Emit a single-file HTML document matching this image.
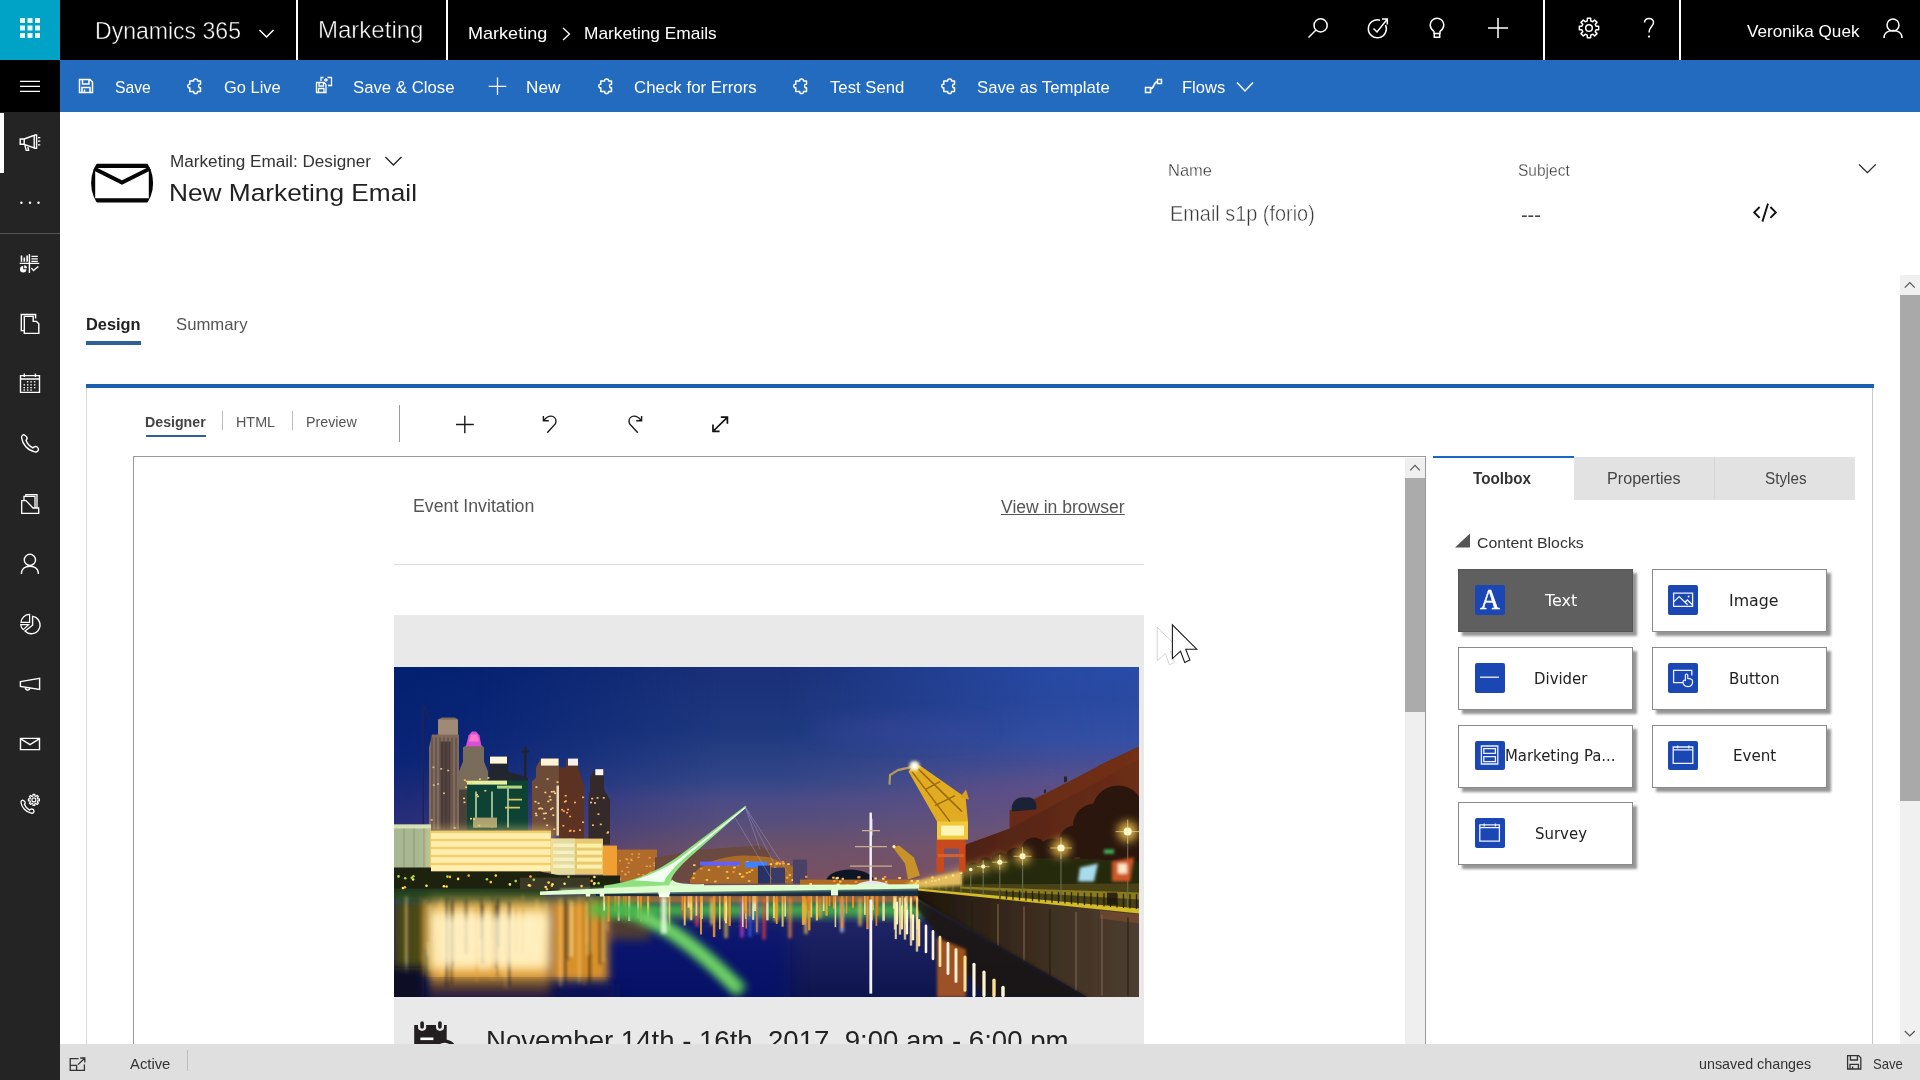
<!DOCTYPE html><html lang="en"><head><meta charset="utf-8"><title>New Marketing Email - Dynamics 365</title><style>
html,body{margin:0;padding:0}
body{width:1920px;height:1080px;overflow:hidden;background:#fff;position:relative;font-family:"Liberation Sans",sans-serif}
div,span,svg,nav,header,main,section,footer,a{position:absolute;display:block}
.t,.v{white-space:pre;line-height:1em;transform-origin:0 0}
.t{font-family:"Liberation Sans",sans-serif}
.v{font-family:"DejaVu Sans","Liberation Sans",sans-serif}
.ic{overflow:visible}
#top{left:0;top:0;width:1920px;height:60px;background:#000}
#waffle{left:0;top:0;width:60px;height:60px;background:#00a3c6}
.vs{top:0;width:2px;height:60px;background:#fff}
#cmd{left:60px;top:60px;width:1860px;height:52.4px;background:#236bbe}
#ham{left:0;top:60px;width:60px;height:52px;background:#000}
#side{left:0;top:112px;width:60px;height:968px;background:#242424}
#sel{left:0;top:113px;width:4px;height:60px;background:#fff}
#sidesep{left:0;top:233px;width:60px;height:1px;background:#555}
#tabul{left:86px;top:341px;width:55px;height:4px;background:#2f6099}
#blue{left:86px;top:384px;width:1788px;height:4px;background:#1c5fae}
#panel{left:86px;top:388px;width:1787px;height:700px;border-left:1px solid #d8d8d8;border-right:1px solid #c8c8c8;box-sizing:border-box}
#dul{left:146px;top:434.5px;width:60px;height:2px;background:#2f6099}
.sp{width:1px;background:#bbb}
#canvas{left:133px;top:456px;width:1293px;height:640px;border:1px solid #9a9a9a;box-sizing:border-box;background:#fff;overflow:hidden}
#csb{left:1405px;top:458px;width:20px;height:600px;background:#efefef}
#csbt{left:1405px;top:477.5px;width:20px;height:234px;background:#ababab}
#psb{left:1900px;top:275px;width:20px;height:770px;background:#f0f0f0}
#psbt{left:1900px;top:295px;width:20px;height:506px;background:#a9a9a9}
#tbtabs{left:1574px;top:457px;width:281px;height:42.5px;background:#e2e2e2}
#tbsep{left:1714px;top:457px;width:1px;height:42px;background:#d6d6d6}
#tbline{left:1433px;top:455.6px;width:141px;height:2.4px;background:#1767c9}
.tb{width:173px;height:61px;background:#fff;border:1px solid #8a8a8a;box-shadow:4px 4px 2.5px rgba(0,0,0,.42)}
.tb.on{background:#5f5f5f;border-color:#555}
.ti{width:29.5px;height:29.5px;border-radius:2px;background:#1b47b5}
#status{left:60px;top:1043.7px;width:1860px;height:36.3px;background:#e0dfe0}
#hr{left:393.5px;top:563.7px;width:750px;height:1px;background:#dcdcdc}
#gray{left:394px;top:615.4px;width:750px;height:470px;background:#e9e9ea}
#photo{left:394px;top:667.4px;width:745.2px;height:329.6px;background:#1c2c6a;overflow:hidden}
</style></head><body>
<main>
<div id="tabul"></div><div id="blue"></div><div id="panel"></div><div id="dul"></div>
<div class="sp" style="left:221.5px;top:411px;height:19px"></div><div class="sp" style="left:291.5px;top:411px;height:19px"></div><div class="sp" style="left:399px;top:405px;height:37px;background:#999"></div>
<section id="canvas"></section>
<div id="hr"></div><div id="gray"></div>
<div id="photo"><svg width="745.2" height="329.6" viewBox="394 667.4 745.2 329.6" preserveAspectRatio="none" style="left:0;top:0;filter:blur(.6px)"><defs>
<linearGradient id="sky" x1="0" y1="0" x2="0" y2="1"><stop offset="0" stop-color="#182e78"/><stop offset=".4" stop-color="#1f368a"/><stop offset=".68" stop-color="#33388c"/><stop offset=".88" stop-color="#54417e"/><stop offset="1" stop-color="#6e4a76"/></linearGradient>
<linearGradient id="skyr" x1="0" y1="0" x2="1" y2="0"><stop offset="0" stop-color="#0e1a66" stop-opacity=".55"/><stop offset=".35" stop-color="#1a2c8c" stop-opacity="0"/><stop offset=".7" stop-color="#2a4cb0" stop-opacity=".3"/><stop offset="1" stop-color="#2c50b8" stop-opacity=".55"/></linearGradient>
<radialGradient id="dusk" cx=".5" cy=".5" r=".5"><stop offset="0" stop-color="#8a5080" stop-opacity=".7"/><stop offset=".6" stop-color="#5a3c80" stop-opacity=".35"/><stop offset="1" stop-color="#3a3088" stop-opacity="0"/></radialGradient>
<linearGradient id="water" x1="0" y1="0" x2="0" y2="1"><stop offset="0" stop-color="#282d69"/><stop offset=".4" stop-color="#1c2262"/><stop offset="1" stop-color="#0d154e"/></linearGradient>
<linearGradient id="refl" x1="0" y1="0" x2="0" y2="1"><stop offset="0" stop-color="#c88a18"/><stop offset=".2" stop-color="#ffe9a8"/><stop offset=".66" stop-color="#ffdc90"/><stop offset=".82" stop-color="#d08a20"/><stop offset="1" stop-color="#5a3a20" stop-opacity=".8"/></linearGradient>
<linearGradient id="wall" x1="0" y1="0" x2="1" y2="0"><stop offset="0" stop-color="#1e160c"/><stop offset=".5" stop-color="#3c2c1e"/><stop offset="1" stop-color="#4e3e30"/></linearGradient>
<linearGradient id="brick" x1="0" y1="0" x2="1" y2="0"><stop offset="0" stop-color="#4e2212"/><stop offset="1" stop-color="#6c2e18"/></linearGradient>
<linearGradient id="mast" x1="0" y1="1" x2="1" y2="0"><stop offset="0" stop-color="#eaffd8"/><stop offset=".6" stop-color="#b8f0a0"/><stop offset="1" stop-color="#f4fff0"/></linearGradient>
<filter id="b1" x="-20%" y="-20%" width="140%" height="140%"><feGaussianBlur stdDeviation="0.7"/></filter>
<filter id="b2" x="-20%" y="-20%" width="140%" height="140%"><feGaussianBlur stdDeviation="1.6"/></filter>
<filter id="b4" x="-30%" y="-30%" width="160%" height="160%"><feGaussianBlur stdDeviation="4"/></filter>
<filter id="b8" x="-30%" y="-30%" width="160%" height="160%"><feGaussianBlur stdDeviation="9"/></filter>
</defs><defs><linearGradient id="skyL" gradientUnits="userSpaceOnUse" x1="0" y1="667" x2="0" y2="897"><stop offset="0.000" stop-color="#022070"/><stop offset="0.404" stop-color="#0a2476"/><stop offset="0.665" stop-color="#282d78"/><stop offset="0.839" stop-color="#4b3770"/><stop offset="0.991" stop-color="#644664"/></linearGradient><linearGradient id="skyM" gradientUnits="userSpaceOnUse" x1="0" y1="667" x2="0" y2="897"><stop offset="0.000" stop-color="#1a3078"/><stop offset="0.274" stop-color="#1e387e"/><stop offset="0.491" stop-color="#324687"/><stop offset="0.578" stop-color="#4b4b87"/><stop offset="0.665" stop-color="#554e7d"/><stop offset="0.796" stop-color="#6e5269"/><stop offset="0.970" stop-color="#7c505e"/></linearGradient><linearGradient id="skyR" gradientUnits="userSpaceOnUse" x1="0" y1="667" x2="0" y2="897"><stop offset="0.000" stop-color="#284ca8"/><stop offset="0.143" stop-color="#2a4aa2"/><stop offset="0.317" stop-color="#3450a5"/><stop offset="0.404" stop-color="#464e96"/><stop offset="0.491" stop-color="#58528c"/><stop offset="0.709" stop-color="#6e5478"/><stop offset="0.970" stop-color="#7c505e"/></linearGradient><linearGradient id="mL" gradientUnits="userSpaceOnUse" x1="394" y1="0" x2="720" y2="0"><stop offset="0" stop-color="#fff"/><stop offset=".25" stop-color="#e0e0e0"/><stop offset="1" stop-color="#000"/></linearGradient><linearGradient id="mR" gradientUnits="userSpaceOnUse" x1="780" y1="0" x2="1139" y2="0"><stop offset="0" stop-color="#000"/><stop offset=".75" stop-color="#e8e8e8"/><stop offset="1" stop-color="#fff"/></linearGradient><mask id="maskL" maskUnits="userSpaceOnUse" x="394" y="667" width="746" height="232"><rect x="394" y="667" width="746" height="232" fill="url(#mL)"/></mask><mask id="maskR" maskUnits="userSpaceOnUse" x="394" y="667" width="746" height="232"><rect x="394" y="667" width="746" height="232" fill="url(#mR)"/></mask></defs><rect x="394" y="667" width="746" height="232" fill="url(#skyM)"/><rect x="394" y="667" width="746" height="232" fill="url(#skyL)" mask="url(#maskL)"/><rect x="394" y="667" width="746" height="232" fill="url(#skyR)" mask="url(#maskR)"/><g filter="url(#b8)" opacity=".35"><ellipse cx="900" cy="730" rx="90" ry="10" fill="#4a4aa0"/><ellipse cx="1010" cy="792" rx="70" ry="9" fill="#6a4a88"/></g><rect x="394" y="890" width="746" height="108" fill="url(#water)"/><rect x="560" y="925" width="230" height="80" fill="#06107a" opacity=".55" filter="url(#b8)"/><g filter="url(#b1)"><path d="M423.2 705 V828 M423.2 705 L430 722" stroke="#1c2458" stroke-width="1.6" fill="none"/><path d="M525.3 747 V800 M522 752 H529" stroke="#20242e" stroke-width="2.4" fill="none"/><path d="M429 830 V748 L432 735 H438 V720 L442 718 H455 L458 720 V735 H459 V830 Z" fill="#806a5a"/><path d="M438 720 H458 V735 H438 Z" fill="#a08a74"/><rect x="440.5" y="742" width="10" height="88" fill="#3c2e2c" opacity=".8"/><path d="M432 738 V830" stroke="#5a4a48" stroke-width="1.2"/><path d="M436 738 V830" stroke="#5a4a48" stroke-width="1.2"/><path d="M440 738 V830" stroke="#5a4a48" stroke-width="1.2"/><path d="M444 738 V830" stroke="#5a4a48" stroke-width="1.2"/><path d="M448 738 V830" stroke="#5a4a48" stroke-width="1.2"/><path d="M452 738 V830" stroke="#5a4a48" stroke-width="1.2"/><path d="M456 738 V830" stroke="#5a4a48" stroke-width="1.2"/><path d="M459 830 V772 L463 762 V748 L466 746 H482 L484 748 V762 L488 772 V830 Z" fill="#7a6c5a"/><path d="M466 746.6 L468.5 736 L472 732 H476 L479.5 736 L481.5 746.6 Z" fill="#d850d8"/><path d="M469 742 L471 735 H477 L479 742 Z" fill="#ff78c8"/><path d="M489 830 V757 H508 V772 L528 778 V830 Z" fill="#23262e"/><rect x="490" y="757" width="17" height="7" fill="#fff8e0"/><rect x="459" y="790" width="10" height="40" fill="#4a4038"/><rect x="467" y="781" width="61" height="50" fill="#0e4236"/><rect x="467" y="781" width="40" height="4" fill="#e8f0a0"/><rect x="497" y="786" width="25" height="3" fill="#b0d880"/><path d="M476 792 V828 M492 792 V828 M508 788 V828" stroke="#9ab890" stroke-width="2"/><rect x="473" y="818" width="24" height="10" fill="#a8a070"/><path d="M508 800 H522 M505 808 H520" stroke="#d8c860" stroke-width="1.6"/><path d="M532 836 V782 L536 778 V768 L541 759 H559 V836 Z" fill="#6c4c38"/><rect x="541" y="759" width="17.5" height="7" fill="#fff4d8"/><rect x="556.5" y="786" width="2.6" height="50" fill="#e8d8b8"/><path d="M559 840 V768 H566 V760 H578 V768 L584 786 V840 Z" fill="#5c3020"/><rect x="568" y="759" width="10" height="7" fill="#f4f0f0"/><path d="M588.5 845 V800 L590 790 V778 L595 770 H604 V790 L610 800 V845 Z" fill="#352a2a"/><rect x="595.3" y="769.6" width="8" height="6" fill="#f8f4f0"/><rect x="470.4" y="783.0" width="2" height="1.6" fill="#ffc860"/><rect x="478.9" y="778.8" width="2" height="1.6" fill="#ffc860"/><rect x="475.9" y="794.4" width="2" height="1.6" fill="#ffc860"/><rect x="463.5" y="801.9" width="2" height="1.6" fill="#ffc860"/><rect x="463.0" y="798.0" width="2" height="1.6" fill="#ffc860"/><rect x="463.8" y="779.8" width="2" height="1.6" fill="#ffc860"/><rect x="473.0" y="818.8" width="2" height="1.6" fill="#ffc860"/><rect x="465.2" y="786.8" width="2" height="1.6" fill="#ffc860"/><rect x="478.3" y="825.2" width="2" height="1.6" fill="#ffc860"/><rect x="477.0" y="796.0" width="2" height="1.6" fill="#ffc860"/><rect x="487.4" y="777.5" width="2" height="1.6" fill="#ffc860"/><rect x="484.3" y="790.3" width="2" height="1.6" fill="#ffc860"/><rect x="465.8" y="781.2" width="2" height="1.6" fill="#ffc860"/><rect x="470.0" y="818.3" width="2" height="1.6" fill="#ffc860"/><rect x="538.2" y="808.2" width="2" height="1.6" fill="#ffd080"/><rect x="548.7" y="796.2" width="2" height="1.6" fill="#ffd080"/><rect x="546.6" y="778.6" width="2" height="1.6" fill="#ffd080"/><rect x="535.4" y="786.7" width="2" height="1.6" fill="#ffd080"/><rect x="549.6" y="799.4" width="2" height="1.6" fill="#ffd080"/><rect x="541.2" y="808.4" width="2" height="1.6" fill="#ffd080"/><rect x="544.4" y="792.1" width="2" height="1.6" fill="#ffd080"/><rect x="552.3" y="814.8" width="2" height="1.6" fill="#ffd080"/><rect x="539.6" y="807.7" width="2" height="1.6" fill="#ffd080"/><rect x="546.1" y="824.9" width="2" height="1.6" fill="#ffd080"/><rect x="550.8" y="791.4" width="2" height="1.6" fill="#ffd080"/><rect x="556.5" y="781.7" width="2" height="1.6" fill="#ffd080"/><rect x="543.6" y="818.2" width="2" height="1.6" fill="#ffd080"/><rect x="537.5" y="802.9" width="2" height="1.6" fill="#ffd080"/><rect x="534.9" y="813.1" width="2" height="1.6" fill="#ffd080"/><rect x="551.6" y="807.7" width="2" height="1.6" fill="#ffd080"/><rect x="554.1" y="792.9" width="2" height="1.6" fill="#ffd080"/><rect x="550.0" y="808.9" width="2" height="1.6" fill="#ffd080"/><rect x="547.3" y="801.0" width="2" height="1.6" fill="#ffd080"/><rect x="553.3" y="828.8" width="2" height="1.6" fill="#ffd080"/><rect x="544.9" y="812.9" width="2" height="1.6" fill="#ffd080"/><rect x="535.4" y="815.0" width="2" height="1.6" fill="#ffd080"/><rect x="548.9" y="831.6" width="2" height="1.6" fill="#ffd080"/><rect x="552.9" y="791.2" width="2" height="1.6" fill="#ffd080"/><rect x="542.9" y="813.1" width="2" height="1.6" fill="#ffd080"/><rect x="534.5" y="801.3" width="2" height="1.6" fill="#ffd080"/><rect x="564.7" y="795.4" width="2" height="1.6" fill="#ffb060"/><rect x="562.3" y="825.3" width="2" height="1.6" fill="#ffb060"/><rect x="563.8" y="801.4" width="2" height="1.6" fill="#ffb060"/><rect x="569.6" y="830.1" width="2" height="1.6" fill="#ffb060"/><rect x="562.8" y="810.7" width="2" height="1.6" fill="#ffb060"/><rect x="573.1" y="830.6" width="2" height="1.6" fill="#ffb060"/><rect x="579.0" y="829.7" width="2" height="1.6" fill="#ffb060"/><rect x="567.1" y="809.1" width="2" height="1.6" fill="#ffb060"/><rect x="568.9" y="830.7" width="2" height="1.6" fill="#ffb060"/><rect x="582.1" y="796.9" width="2" height="1.6" fill="#ffb060"/><rect x="564.9" y="800.7" width="2" height="1.6" fill="#ffb060"/><rect x="566.1" y="812.3" width="2" height="1.6" fill="#ffb060"/><rect x="574.0" y="802.1" width="2" height="1.6" fill="#ffb060"/><rect x="561.1" y="809.3" width="2" height="1.6" fill="#ffb060"/><rect x="569.1" y="816.1" width="2" height="1.6" fill="#ffb060"/><rect x="582.0" y="821.8" width="2" height="1.6" fill="#ffb060"/><rect x="599.8" y="824.0" width="2" height="1.6" fill="#ffc070"/><rect x="602.8" y="797.5" width="2" height="1.6" fill="#ffc070"/><rect x="607.1" y="831.7" width="2" height="1.6" fill="#ffc070"/><rect x="606.6" y="832.5" width="2" height="1.6" fill="#ffc070"/><rect x="597.5" y="813.8" width="2" height="1.6" fill="#ffc070"/><rect x="592.0" y="824.8" width="2" height="1.6" fill="#ffc070"/><rect x="591.2" y="798.2" width="2" height="1.6" fill="#ffc070"/><rect x="594.0" y="802.6" width="2" height="1.6" fill="#ffc070"/><rect x="596.5" y="797.5" width="2" height="1.6" fill="#ffc070"/><rect x="590.0" y="802.1" width="2" height="1.6" fill="#ffc070"/><rect x="432.8" y="784.7" width="2" height="1.6" fill="#d8b890"/><rect x="430.7" y="819.5" width="2" height="1.6" fill="#d8b890"/><rect x="447.2" y="770.1" width="2" height="1.6" fill="#d8b890"/><rect x="437.1" y="783.6" width="2" height="1.6" fill="#d8b890"/><rect x="440.2" y="768.4" width="2" height="1.6" fill="#d8b890"/><rect x="453.8" y="827.5" width="2" height="1.6" fill="#d8b890"/><rect x="443.0" y="792.9" width="2" height="1.6" fill="#d8b890"/><rect x="432.4" y="766.9" width="2" height="1.6" fill="#d8b890"/></g><g filter="url(#b1)"><rect x="394" y="825" width="37" height="44" fill="#aab892"/><path d="M394 825 H431 V829 H394 Z" fill="#d8e0b8"/><path d="M404 829 V868 M414 829 V868 M424 829 V868" stroke="#8a9a78" stroke-width="1"/><rect x="430" y="831" width="121" height="41" fill="#efc050"/><rect x="431" y="833.5" width="119.5" height="5.8" fill="#fffad4"/><rect x="431" y="841.5" width="119.5" height="5.8" fill="#fffad4"/><rect x="431" y="849.5" width="119.5" height="5.8" fill="#fffad4"/><rect x="431" y="857.5" width="119.5" height="5.8" fill="#fffad4"/><rect x="431" y="865.5" width="119.5" height="5.8" fill="#fffad4"/><rect x="551" y="839" width="52" height="36" fill="#e8c870"/><rect x="551" y="839" width="24" height="36" fill="#e4dca0"/><rect x="577" y="844" width="25" height="4" fill="#fff0a8"/><rect x="553" y="844" width="21" height="3.4" fill="#fff8d0" opacity=".7"/><rect x="577" y="851" width="25" height="4" fill="#fff0a8"/><rect x="553" y="851" width="21" height="3.4" fill="#fff8d0" opacity=".7"/><rect x="577" y="858" width="25" height="4" fill="#fff0a8"/><rect x="553" y="858" width="21" height="3.4" fill="#fff8d0" opacity=".7"/><rect x="577" y="865" width="25" height="4" fill="#fff0a8"/><rect x="553" y="865" width="21" height="3.4" fill="#fff8d0" opacity=".7"/><rect x="603" y="846" width="14" height="36" fill="#f0a030"/><rect x="617" y="850" width="40" height="32" fill="#b06a2c"/><rect x="630.7" y="860.1" width="2" height="1.5" fill="#e8a050"/><rect x="648.7" y="857.4" width="2" height="1.5" fill="#e8a050"/><rect x="618.9" y="878.7" width="2" height="1.5" fill="#e8a050"/><rect x="637.5" y="857.0" width="2" height="1.5" fill="#e8a050"/><rect x="638.1" y="853.7" width="2" height="1.5" fill="#e8a050"/><rect x="637.5" y="879.4" width="2" height="1.5" fill="#e8a050"/><rect x="649.9" y="871.8" width="2" height="1.5" fill="#e8a050"/><rect x="627.7" y="862.9" width="2" height="1.5" fill="#e8a050"/><rect x="624.2" y="873.8" width="2" height="1.5" fill="#e8a050"/><rect x="637.7" y="874.0" width="2" height="1.5" fill="#e8a050"/><rect x="630.2" y="859.0" width="2" height="1.5" fill="#e8a050"/><rect x="648.0" y="879.6" width="2" height="1.5" fill="#e8a050"/><rect x="649.5" y="874.8" width="2" height="1.5" fill="#e8a050"/><rect x="648.3" y="873.0" width="2" height="1.5" fill="#e8a050"/><rect x="626.4" y="867.0" width="2" height="1.5" fill="#e8a050"/><rect x="631.2" y="853.8" width="2" height="1.5" fill="#e8a050"/><rect x="619.0" y="860.5" width="2" height="1.5" fill="#e8a050"/><rect x="627.6" y="871.7" width="2" height="1.5" fill="#e8a050"/><rect x="653.4" y="865.1" width="2" height="1.5" fill="#e8a050"/><rect x="652.7" y="879.7" width="2" height="1.5" fill="#e8a050"/><rect x="653.3" y="862.8" width="2" height="1.5" fill="#e8a050"/><rect x="626.2" y="859.1" width="2" height="1.5" fill="#e8a050"/><rect x="625.3" y="858.5" width="2" height="1.5" fill="#e8a050"/><rect x="641.1" y="877.3" width="2" height="1.5" fill="#e8a050"/><rect x="649.1" y="865.9" width="2" height="1.5" fill="#e8a050"/><rect x="642.2" y="874.6" width="2" height="1.5" fill="#e8a050"/><rect x="621.1" y="870.8" width="2" height="1.5" fill="#e8a050"/><rect x="651.7" y="874.1" width="2" height="1.5" fill="#e8a050"/><rect x="645.8" y="865.9" width="2" height="1.5" fill="#e8a050"/><rect x="624.6" y="874.3" width="2" height="1.5" fill="#e8a050"/></g><rect x="428" y="828" width="125" height="47" fill="#ffe080" opacity=".45" filter="url(#b4)"/><g filter="url(#b1)"><path d="M655 883 V858 L700 850 L760 846 L770 852 V883 Z" fill="#6a4a40"/><path d="M690 880 C700 858 740 852 770 858 L800 870 V884 H690 Z" fill="#a86a28"/><rect x="726.6" y="877.6" width="2.4" height="1.8" fill="#e8c050"/><rect x="740.9" y="876.4" width="2.4" height="1.8" fill="#ffb040"/><rect x="769.7" y="863.7" width="2.4" height="1.8" fill="#ffd070"/><rect x="693.0" y="873.0" width="2.4" height="1.8" fill="#e8c050"/><rect x="778.7" y="863.2" width="2.4" height="1.8" fill="#e8c050"/><rect x="762.3" y="867.7" width="2.4" height="1.8" fill="#ffd070"/><rect x="692.4" y="877.6" width="2.4" height="1.8" fill="#ffb040"/><rect x="747.9" y="880.5" width="2.4" height="1.8" fill="#e8c050"/><rect x="798.5" y="864.3" width="2.4" height="1.8" fill="#ffd070"/><rect x="693.1" y="864.7" width="2.4" height="1.8" fill="#ffd070"/><rect x="774.0" y="867.2" width="2.4" height="1.8" fill="#e8c050"/><rect x="781.8" y="861.3" width="2.4" height="1.8" fill="#ff9030"/><rect x="788.7" y="874.6" width="2.4" height="1.8" fill="#e8c050"/><rect x="781.0" y="879.3" width="2.4" height="1.8" fill="#ffd070"/><rect x="748.5" y="871.5" width="2.4" height="1.8" fill="#ffb040"/><rect x="786.0" y="877.1" width="2.4" height="1.8" fill="#ffb040"/><rect x="775.4" y="863.3" width="2.4" height="1.8" fill="#ffd070"/><rect x="742.1" y="876.0" width="2.4" height="1.8" fill="#ffb040"/><rect x="725.9" y="871.4" width="2.4" height="1.8" fill="#e8c050"/><rect x="776.3" y="862.3" width="2.4" height="1.8" fill="#ffb040"/><rect x="717.3" y="866.1" width="2.4" height="1.8" fill="#ffb040"/><rect x="745.8" y="872.4" width="2.4" height="1.8" fill="#ffb040"/><rect x="738.8" y="873.5" width="2.4" height="1.8" fill="#ffd070"/><rect x="766.2" y="870.0" width="2.4" height="1.8" fill="#e8c050"/><rect x="745.9" y="865.4" width="2.4" height="1.8" fill="#ff9030"/><rect x="791.5" y="879.6" width="2.4" height="1.8" fill="#ffd070"/><rect x="782.4" y="863.0" width="2.4" height="1.8" fill="#ffb040"/><rect x="733.2" y="867.0" width="2.4" height="1.8" fill="#ffd070"/><rect x="737.1" y="864.7" width="2.4" height="1.8" fill="#ff9030"/><rect x="776.2" y="879.7" width="2.4" height="1.8" fill="#ffd070"/><rect x="793.3" y="874.2" width="2.4" height="1.8" fill="#ff9030"/><rect x="705.7" y="879.4" width="2.4" height="1.8" fill="#e8c050"/><rect x="714.2" y="881.0" width="2.4" height="1.8" fill="#e8c050"/><rect x="787.3" y="863.6" width="2.4" height="1.8" fill="#ffd070"/><rect x="707.8" y="869.5" width="2.4" height="1.8" fill="#e8c050"/><rect x="727.3" y="864.3" width="2.4" height="1.8" fill="#ff9030"/><rect x="700.1" y="868.1" width="2.4" height="1.8" fill="#ff9030"/><rect x="750.9" y="869.7" width="2.4" height="1.8" fill="#ffb040"/><rect x="732.3" y="871.4" width="2.4" height="1.8" fill="#ff9030"/><rect x="746.3" y="861.4" width="2.4" height="1.8" fill="#ffd070"/><rect x="700" y="862" width="40" height="4" fill="#6060ff"/><rect x="745" y="862" width="22" height="6" fill="#4080ff"/><rect x="758" y="866" width="12" height="18" fill="#283068"/><rect x="771" y="868" width="14" height="16" fill="#3a3a6a"/><rect x="793" y="860" width="14" height="24" fill="#4a4266"/><ellipse cx="850" cy="882" rx="24" ry="12" fill="#101828"/><rect x="800" y="880" width="120" height="8" fill="#b06a20"/><rect x="931.2" y="877.0" width="2.4" height="2" fill="#ffe080"/><rect x="836.7" y="885.1" width="2.4" height="2" fill="#ffc050"/><rect x="836.5" y="877.3" width="2.4" height="2" fill="#ffe080"/><rect x="914.7" y="882.8" width="2.4" height="2" fill="#ffe080"/><rect x="854.8" y="881.4" width="2.4" height="2" fill="#ff9030"/><rect x="877.0" y="883.0" width="2.4" height="2" fill="#ffc050"/><rect x="837.7" y="884.0" width="2.4" height="2" fill="#ffc050"/><rect x="857.4" y="876.7" width="2.4" height="2" fill="#ffc050"/><rect x="885.6" y="884.0" width="2.4" height="2" fill="#ffc050"/><rect x="882.1" y="878.2" width="2.4" height="2" fill="#ffe080"/><rect x="916.5" y="880.5" width="2.4" height="2" fill="#ffe080"/><rect x="934.2" y="880.2" width="2.4" height="2" fill="#ffe080"/><rect x="883.9" y="876.4" width="2.4" height="2" fill="#ff9030"/><rect x="832.2" y="877.1" width="2.4" height="2" fill="#ffc050"/><rect x="835.4" y="877.8" width="2.4" height="2" fill="#ffe080"/><rect x="884.9" y="881.3" width="2.4" height="2" fill="#ffc050"/><rect x="839.1" y="881.0" width="2.4" height="2" fill="#ffc050"/><rect x="836.5" y="884.0" width="2.4" height="2" fill="#ffe080"/><rect x="805.0" y="876.2" width="2.4" height="2" fill="#ff9030"/><rect x="874.4" y="877.9" width="2.4" height="2" fill="#ffe080"/><rect x="833.2" y="880.5" width="2.4" height="2" fill="#ff9030"/><rect x="910.6" y="880.3" width="2.4" height="2" fill="#ffe080"/><rect x="873.7" y="884.9" width="2.4" height="2" fill="#ff9030"/><rect x="841.6" y="878.2" width="2.4" height="2" fill="#ffc050"/><rect x="846.3" y="884.3" width="2.4" height="2" fill="#ff9030"/><rect x="898.4" y="877.4" width="2.4" height="2" fill="#ffe080"/><rect x="932.6" y="884.4" width="2.4" height="2" fill="#ffc050"/><rect x="809.5" y="883.4" width="2.4" height="2" fill="#ffe080"/><rect x="858.1" y="876.6" width="2.4" height="2" fill="#ff9030"/><rect x="913.6" y="884.7" width="2.4" height="2" fill="#ff9030"/></g><g filter="url(#b1)"><path d="M394 868 H431 V872 H540 L560 876 H620 V892 H394 Z" fill="#1c2410"/><rect x="394" y="889" width="150" height="11" fill="#22381c"/><rect x="520" y="878" width="70" height="12" fill="#3a3828"/><circle cx="594.1" cy="884.4" r="1.3" fill="#a0e040"/><circle cx="405.2" cy="878.6" r="1.3" fill="#a0e040"/><circle cx="486.9" cy="879.7" r="1.3" fill="#a0e040"/><circle cx="594.4" cy="883.7" r="1.3" fill="#ffe880"/><circle cx="403.0" cy="888.4" r="1.3" fill="#ffe880"/><circle cx="468.7" cy="876.0" r="1.3" fill="#ffb030"/><circle cx="413.1" cy="879.9" r="1.3" fill="#ffe880"/><circle cx="446.6" cy="886.9" r="1.3" fill="#ffd040"/><circle cx="449.9" cy="877.3" r="1.3" fill="#ffb030"/><circle cx="515.7" cy="881.5" r="1.3" fill="#a0e040"/><circle cx="458.1" cy="879.3" r="1.3" fill="#ffe880"/><circle cx="530.1" cy="886.0" r="1.3" fill="#ffb030"/><circle cx="551.9" cy="886.1" r="1.3" fill="#ffb030"/><circle cx="426.5" cy="886.1" r="1.3" fill="#ffe880"/><circle cx="404.9" cy="887.7" r="1.3" fill="#ffb030"/><circle cx="545.7" cy="887.4" r="1.3" fill="#ffe880"/><circle cx="581.6" cy="886.5" r="1.3" fill="#ffd040"/><circle cx="564.6" cy="884.2" r="1.3" fill="#ffe880"/><circle cx="413.4" cy="876.6" r="1.3" fill="#a0e040"/><circle cx="591.7" cy="881.3" r="1.3" fill="#ffb030"/><circle cx="509.9" cy="884.8" r="1.3" fill="#ffe880"/><circle cx="495.8" cy="876.0" r="1.3" fill="#ffd040"/><circle cx="548.6" cy="883.0" r="1.3" fill="#ffd040"/><circle cx="530.5" cy="876.9" r="1.3" fill="#ffb030"/><circle cx="447.4" cy="877.0" r="1.3" fill="#a0e040"/><circle cx="443.9" cy="886.6" r="1.3" fill="#ffe880"/><circle cx="546.9" cy="889.7" r="1.3" fill="#ffb030"/><circle cx="568.5" cy="877.1" r="1.3" fill="#a0e040"/><circle cx="552.5" cy="884.6" r="1.3" fill="#ffe880"/><circle cx="411.8" cy="878.1" r="1.3" fill="#a0e040"/><circle cx="528.9" cy="885.7" r="1.3" fill="#ffe880"/><circle cx="398.5" cy="876.8" r="1.3" fill="#a0e040"/><circle cx="594.4" cy="877.4" r="1.3" fill="#ffe880"/><circle cx="533.8" cy="880.1" r="1.3" fill="#a0e040"/><circle cx="490.8" cy="882.5" r="1.3" fill="#ffd040"/><circle cx="598.6" cy="883.7" r="1.3" fill="#a0e040"/></g><g filter="url(#b4)"><rect x="394" y="900" width="36" height="76" fill="#4a4a14"/><rect x="429" y="898" width="121" height="100" fill="url(#refl)"/><rect x="552" y="898" width="56" height="84" fill="#d8902a"/><rect x="610" y="900" width="40" height="40" fill="#6a4a20" opacity=".7"/></g><g filter="url(#b2)"><path d="M607.3 904.4 V931.1" stroke="#ffd070" stroke-width="1.3" opacity=".6"/><path d="M505.4 905.0 V989.6" stroke="#ffd070" stroke-width="1.6" opacity=".6"/><path d="M600.2 897.9 V964.9" stroke="#3a2a10" stroke-width="2.5" opacity=".6"/><path d="M452.6 899.2 V966.2" stroke="#1a1a30" stroke-width="2.1" opacity=".6"/><path d="M587.6 902.3 V943.9" stroke="#ffd070" stroke-width="1.9" opacity=".6"/><path d="M430.4 904.5 V970.9" stroke="#ffd070" stroke-width="1.7" opacity=".6"/><path d="M426.4 899.1 V949.0" stroke="#e8a030" stroke-width="1.8" opacity=".6"/><path d="M466.1 899.0 V953.9" stroke="#3a2a10" stroke-width="2.5" opacity=".6"/><path d="M590.7 898.6 V952.3" stroke="#ffd070" stroke-width="1.9" opacity=".6"/><path d="M583.9 896.7 V985.5" stroke="#e8a030" stroke-width="1.7" opacity=".6"/><path d="M406.4 896.9 V980.1" stroke="#fff0b0" stroke-width="2.3" opacity=".6"/><path d="M428.2 904.7 V956.2" stroke="#fff0b0" stroke-width="1.5" opacity=".6"/><path d="M476.6 904.6 V983.1" stroke="#e8a030" stroke-width="2.6" opacity=".6"/><path d="M482.4 903.9 V963.2" stroke="#3a2a10" stroke-width="2.5" opacity=".6"/><path d="M406.7 902.6 V957.1" stroke="#e8a030" stroke-width="1.4" opacity=".6"/><path d="M583.8 900.4 V984.7" stroke="#a86a18" stroke-width="1.4" opacity=".6"/><path d="M498.0 899.1 V947.9" stroke="#1a1a30" stroke-width="2.5" opacity=".6"/><path d="M537.0 899.7 V944.3" stroke="#ffd070" stroke-width="2.2" opacity=".6"/><path d="M481.2 897.5 V939.7" stroke="#3a2a10" stroke-width="2.1" opacity=".6"/><path d="M571.4 901.0 V957.2" stroke="#fff0b0" stroke-width="3.0" opacity=".6"/><path d="M493.2 897.3 V941.5" stroke="#2a2008" stroke-width="1.5" opacity=".6"/><path d="M516.1 898.9 V952.1" stroke="#e8a030" stroke-width="2.2" opacity=".6"/><path d="M587.6 902.7 V954.8" stroke="#ffd070" stroke-width="2.5" opacity=".6"/><path d="M441.4 898.4 V975.1" stroke="#ffd070" stroke-width="1.7" opacity=".6"/><path d="M605.0 897.1 V960.2" stroke="#1a1a30" stroke-width="2.6" opacity=".6"/><path d="M579.3 896.8 V983.8" stroke="#ffd070" stroke-width="1.9" opacity=".6"/><path d="M492.3 904.6 V980.9" stroke="#e8a030" stroke-width="2.9" opacity=".6"/><path d="M423.5 899.8 V975.8" stroke="#e8a030" stroke-width="2.1" opacity=".6"/><path d="M522.8 896.0 V953.5" stroke="#e8a030" stroke-width="2.2" opacity=".6"/><path d="M497.1 900.0 V977.0" stroke="#3a2a10" stroke-width="1.5" opacity=".6"/><path d="M508.8 902.1 V986.5" stroke="#1a1a30" stroke-width="2.5" opacity=".6"/><path d="M578.8 904.1 V935.1" stroke="#e8a030" stroke-width="1.3" opacity=".6"/><path d="M565.0 898.1 V985.2" stroke="#1a1a30" stroke-width="2.5" opacity=".6"/><path d="M603.9 901.6 V961.7" stroke="#ffd070" stroke-width="2.5" opacity=".6"/><path d="M420.2 896.6 V961.5" stroke="#a86a18" stroke-width="1.5" opacity=".6"/><path d="M452.4 903.1 V930.1" stroke="#a86a18" stroke-width="1.7" opacity=".6"/><path d="M495.5 904.6 V968.7" stroke="#3a2a10" stroke-width="2.1" opacity=".6"/><path d="M446.7 898.2 V987.6" stroke="#1a1a30" stroke-width="2.4" opacity=".6"/><path d="M407.9 897.7 V983.1" stroke="#1a1a30" stroke-width="2.0" opacity=".6"/><path d="M451.6 902.0 V985.5" stroke="#3a2a10" stroke-width="2.1" opacity=".6"/><path d="M546.3 902.5 V951.7" stroke="#ffd070" stroke-width="1.6" opacity=".6"/><path d="M568.2 902.7 V960.3" stroke="#3a2a10" stroke-width="2.1" opacity=".6"/><path d="M439.3 902.9 V941.6" stroke="#ffd070" stroke-width="1.6" opacity=".6"/><path d="M560.3 898.7 V987.1" stroke="#ffd070" stroke-width="2.3" opacity=".6"/><path d="M589.6 900.4 V984.6" stroke="#2a2008" stroke-width="2.9" opacity=".6"/><path d="M427.6 899.5 V942.8" stroke="#a86a18" stroke-width="1.5" opacity=".6"/></g><rect x="394" y="984" width="220" height="20" fill="#10144a" opacity=".7" filter="url(#b8)"/><rect x="380" y="968" width="44" height="40" fill="#080a28" filter="url(#b4)"/><rect x="436" y="916" width="108" height="50" fill="#fff2c8" opacity=".8" filter="url(#b4)"/><g filter="url(#b4)"><rect x="590" y="904" width="335" height="13" fill="#48c048" opacity=".9"/><rect x="394" y="896" width="220" height="5" fill="#2a6a3a" opacity=".7"/></g><g filter="url(#b2)"><path d="M684 898 V919.14" stroke="#ff4040" stroke-width="3" opacity=".8"/><path d="M690 898 V919.323" stroke="#ff8040" stroke-width="3" opacity=".8"/><path d="M697 898 V926.653" stroke="#ff4060" stroke-width="3" opacity=".8"/><path d="M742 898 V937.76" stroke="#e040e0" stroke-width="3" opacity=".8"/><path d="M750 898 V937.439" stroke="#4060ff" stroke-width="3" opacity=".8"/><path d="M757 898 V934.12" stroke="#3080ff" stroke-width="3" opacity=".8"/><path d="M764 898 V939.946" stroke="#ff4040" stroke-width="3" opacity=".8"/><path d="M726 898 V938.495" stroke="#ffd040" stroke-width="3" opacity=".8"/><path d="M712 898 V925.243" stroke="#ffe080" stroke-width="3" opacity=".8"/><path d="M776 898 V922.081" stroke="#ffd040" stroke-width="3" opacity=".8"/><path d="M790 898 V938.589" stroke="#ff9040" stroke-width="3" opacity=".8"/><path d="M806 898 V934.419" stroke="#ffd060" stroke-width="3" opacity=".8"/><path d="M820 898 V918.702" stroke="#ffb040" stroke-width="3" opacity=".8"/><path d="M842 898 V932.617" stroke="#e8e8ff" stroke-width="3" opacity=".8"/><path d="M860 898 V926.33" stroke="#ffd060" stroke-width="3" opacity=".8"/></g><g filter="url(#b1)"><path d="M746.0 896 V919.4" stroke="#fff0b0" stroke-width="1.9" opacity=".85"/><path d="M872.5 896 V910.6" stroke="#fff0b0" stroke-width="2.2" opacity=".85"/><path d="M853.0 896 V908.3" stroke="#ff9a20" stroke-width="2.0" opacity=".85"/><path d="M883.6 896 V921.2" stroke="#fff0b0" stroke-width="2.6" opacity=".85"/><path d="M809.3 896 V930.8" stroke="#ff9a20" stroke-width="2.4" opacity=".85"/><path d="M623.8 896 V906.9" stroke="#ff8018" stroke-width="1.4" opacity=".85"/><path d="M749.7 896 V916.6" stroke="#ff8018" stroke-width="1.7" opacity=".85"/><path d="M696.4 896 V916.1" stroke="#ffe8a0" stroke-width="1.7" opacity=".85"/><path d="M917.3 896 V929.9" stroke="#ffe8a0" stroke-width="1.7" opacity=".85"/><path d="M842.0 896 V928.3" stroke="#ff8018" stroke-width="2.3" opacity=".85"/><path d="M729.7 896 V926.3" stroke="#ff9a20" stroke-width="2.4" opacity=".85"/><path d="M604.2 896 V911.0" stroke="#fff0b0" stroke-width="1.9" opacity=".85"/><path d="M826.6 896 V916.1" stroke="#ffb030" stroke-width="2.3" opacity=".85"/><path d="M688.7 896 V908.1" stroke="#fff0b0" stroke-width="2.3" opacity=".85"/><path d="M641.0 896 V921.9" stroke="#ff9a20" stroke-width="2.0" opacity=".85"/><path d="M756.9 896 V932.4" stroke="#ff8018" stroke-width="1.6" opacity=".85"/><path d="M833.8 896 V909.1" stroke="#ff9a20" stroke-width="1.9" opacity=".85"/><path d="M914.9 896 V906.0" stroke="#e87818" stroke-width="2.1" opacity=".85"/><path d="M917.3 896 V916.5" stroke="#e87818" stroke-width="2.1" opacity=".85"/><path d="M785.2 896 V917.0" stroke="#fff0b0" stroke-width="1.7" opacity=".85"/><path d="M846.6 896 V913.9" stroke="#ff9a20" stroke-width="1.5" opacity=".85"/><path d="M669.5 896 V931.3" stroke="#ffd860" stroke-width="1.8" opacity=".85"/><path d="M746.3 896 V929.0" stroke="#ff8018" stroke-width="1.6" opacity=".85"/><path d="M725.2 896 V921.1" stroke="#ffb030" stroke-width="2.4" opacity=".85"/><path d="M682.3 896 V910.6" stroke="#ff8018" stroke-width="1.6" opacity=".85"/><path d="M902.3 896 V927.2" stroke="#fff0b0" stroke-width="1.5" opacity=".85"/><path d="M638.2 896 V918.3" stroke="#ffe8a0" stroke-width="2.2" opacity=".85"/><path d="M684.7 896 V925.8" stroke="#ffd860" stroke-width="2.0" opacity=".85"/><path d="M895.8 896 V939.5" stroke="#fff0b0" stroke-width="2.1" opacity=".85"/><path d="M871.7 896 V920.7" stroke="#ffb030" stroke-width="2.3" opacity=".85"/><path d="M625.7 896 V915.9" stroke="#ff9a20" stroke-width="1.6" opacity=".85"/><path d="M719.8 896 V929.7" stroke="#ffd860" stroke-width="1.6" opacity=".85"/><path d="M745.4 896 V913.9" stroke="#ff8018" stroke-width="2.1" opacity=".85"/><path d="M648.1 896 V916.8" stroke="#ffd860" stroke-width="2.2" opacity=".85"/><path d="M906.3 896 V906.5" stroke="#fff0b0" stroke-width="1.5" opacity=".85"/><path d="M701.7 896 V919.3" stroke="#fff0b0" stroke-width="2.1" opacity=".85"/><path d="M835.4 896 V927.6" stroke="#ffe8a0" stroke-width="1.6" opacity=".85"/><path d="M906.5 896 V924.2" stroke="#fff0b0" stroke-width="2.5" opacity=".85"/><path d="M877.5 896 V916.0" stroke="#e87818" stroke-width="2.0" opacity=".85"/><path d="M608.6 896 V921.9" stroke="#ff9a20" stroke-width="2.1" opacity=".85"/><path d="M629.2 896 V921.3" stroke="#fff0b0" stroke-width="2.3" opacity=".85"/><path d="M726.0 896 V923.6" stroke="#fff0b0" stroke-width="2.0" opacity=".85"/><path d="M774.0 896 V918.4" stroke="#ffd860" stroke-width="2.1" opacity=".85"/><path d="M755.0 896 V911.5" stroke="#fff0b0" stroke-width="2.3" opacity=".85"/><path d="M811.3 896 V917.7" stroke="#ffd860" stroke-width="1.8" opacity=".85"/><path d="M816.9 896 V920.9" stroke="#ffd860" stroke-width="2.2" opacity=".85"/><path d="M742.8 896 V927.4" stroke="#ffe8a0" stroke-width="1.7" opacity=".85"/><path d="M803.1 896 V925.3" stroke="#ffb030" stroke-width="2.5" opacity=".85"/><path d="M724.7 896 V920.0" stroke="#ffb030" stroke-width="1.6" opacity=".85"/><path d="M714.1 896 V937.5" stroke="#ff9a20" stroke-width="2.5" opacity=".85"/><path d="M690.9 896 V910.1" stroke="#ffd860" stroke-width="2.5" opacity=".85"/><path d="M864.9 896 V915.2" stroke="#ffe8a0" stroke-width="1.8" opacity=".85"/><path d="M867.5 896 V929.6" stroke="#ff9a20" stroke-width="2.4" opacity=".85"/><path d="M691.3 896 V920.6" stroke="#ffd860" stroke-width="2.1" opacity=".85"/><path d="M701.0 896 V935.0" stroke="#ffb030" stroke-width="1.9" opacity=".85"/><path d="M663.6 896 V924.5" stroke="#e87818" stroke-width="1.6" opacity=".85"/><path d="M618.7 896 V921.1" stroke="#ffe8a0" stroke-width="2.0" opacity=".85"/><path d="M804.9 896 V924.8" stroke="#ffb030" stroke-width="1.6" opacity=".85"/><path d="M753.2 896 V920.3" stroke="#fff0b0" stroke-width="2.0" opacity=".85"/><path d="M615.4 896 V911.4" stroke="#ff8018" stroke-width="2.2" opacity=".85"/><path d="M767.4 896 V920.7" stroke="#fff0b0" stroke-width="2.4" opacity=".85"/><path d="M823.7 896 V911.4" stroke="#ffe8a0" stroke-width="1.9" opacity=".85"/><path d="M745.5 896 V910.7" stroke="#ff9a20" stroke-width="1.9" opacity=".85"/><path d="M782.6 896 V927.1" stroke="#ffd860" stroke-width="2.0" opacity=".85"/><path d="M808.5 896 V910.9" stroke="#e87818" stroke-width="2.4" opacity=".85"/><path d="M894.2 896 V909.0" stroke="#fff0b0" stroke-width="2.6" opacity=".85"/><path d="M910.9 896 V918.9" stroke="#ffd860" stroke-width="1.7" opacity=".85"/><path d="M829.5 896 V906.4" stroke="#ff9a20" stroke-width="1.9" opacity=".85"/><path d="M776.8 896 V924.4" stroke="#ff9a20" stroke-width="1.7" opacity=".85"/><path d="M876.4 896 V926.3" stroke="#ff8018" stroke-width="1.8" opacity=".85"/></g><rect x="604" y="894" width="316" height="9" fill="#e88a20" opacity=".55" filter="url(#b2)"/><path d="M612 908 C660 916 700 950 742 992" stroke="#48b850" stroke-width="15" fill="none" filter="url(#b4)" opacity=".95"/><path d="M640 916 C676 930 708 958 738 990" stroke="#90e878" stroke-width="6" fill="none" filter="url(#b4)"/><rect x="869.4" y="900" width="2.8" height="94" fill="#f4f4ff" filter="url(#b1)"/><rect x="661" y="898" width="6" height="36" fill="#e8ffe0" filter="url(#b2)" opacity=".8"/><g filter="url(#b1)"><path d="M962 886 V849 L967 844.5 L985 838 L1009.7 829 V811 L1040 797 L1075 779 L1105 763 L1139.4 746.6 V890 Z" fill="url(#brick)"/><path d="M1009.7 829 V811 L1139.4 747 V760 Z" fill="#7a3418" opacity=".45"/><path d="M1064 783 V777 H1067 V782 Z M1044 794 V790 H1046 V793 Z" fill="#2a2030"/><path d="M1012 812 C1010 802 1018 796 1026 798 C1034 796 1038 804 1036 810 Z" fill="#1c2434"/><g fill="#2a160c"><circle cx="1118" cy="812" r="26"/><circle cx="1095" cy="826" r="22"/><circle cx="1132" cy="836" r="24"/><circle cx="1075" cy="842" r="16"/><circle cx="1100" cy="850" r="22"/><circle cx="1052" cy="852" r="13"/><circle cx="1034" cy="850" r="12"/><circle cx="1016" cy="858" r="10"/><circle cx="1000" cy="862" r="9"/><circle cx="986" cy="866" r="8"/><circle cx="974" cy="870" r="7"/><circle cx="1060" cy="866" r="16"/><circle cx="1128" cy="860" r="20"/></g><path d="M962 886 V868 C990 858 1040 856 1139.4 862 V892 H962 Z" fill="#262c0e"/></g><g filter="url(#b1)"><path d="M918 885 L1139.4 884 V914 L918 891 Z" fill="#4a4214"/><path d="M960 887 L1139.4 893 V900 L960 889 Z" fill="#9a8a20" opacity=".8"/><path d="M918 889 L1139.4 909 V915 L918 892 Z" fill="#d4bc28"/><path d="M918 891 L1139.4 914 V998 H1088 L918 899.5 Z" fill="url(#wall)"/><path d="M1100 911 L1139.4 915 V924 L1100 919 Z" fill="#7a4a30" opacity=".7"/></g><g filter="url(#b1)" opacity=".85"><path d="M1000 890.46 V899.15" stroke="#1a160a" stroke-width="1.3"/><path d="M1006.5 890.655 V899.638" stroke="#1a160a" stroke-width="1.3"/><path d="M1013 890.85 V900.125" stroke="#1a160a" stroke-width="1.3"/><path d="M1019.5 891.045 V900.612" stroke="#1a160a" stroke-width="1.3"/><path d="M1026 891.24 V901.1" stroke="#1a160a" stroke-width="1.3"/><path d="M1032.5 891.435 V901.587" stroke="#1a160a" stroke-width="1.3"/><path d="M1039 891.63 V902.075" stroke="#1a160a" stroke-width="1.3"/><path d="M1045.5 891.825 V902.562" stroke="#1a160a" stroke-width="1.3"/><path d="M1052 892.02 V903.05" stroke="#1a160a" stroke-width="1.3"/><path d="M1058.5 892.215 V903.538" stroke="#1a160a" stroke-width="1.3"/><path d="M1065 892.41 V904.025" stroke="#1a160a" stroke-width="1.3"/><path d="M1071.5 892.605 V904.513" stroke="#1a160a" stroke-width="1.3"/><path d="M1078 892.8 V905" stroke="#1a160a" stroke-width="1.3"/><path d="M1084.5 892.995 V905.487" stroke="#1a160a" stroke-width="1.3"/><path d="M1091 893.19 V905.975" stroke="#1a160a" stroke-width="1.3"/><path d="M1097.5 893.385 V906.462" stroke="#1a160a" stroke-width="1.3"/><path d="M1104 893.58 V906.95" stroke="#1a160a" stroke-width="1.3"/><path d="M1110.5 893.775 V907.438" stroke="#1a160a" stroke-width="1.3"/><path d="M1117 893.97 V907.925" stroke="#1a160a" stroke-width="1.3"/><path d="M1123.5 894.165 V908.413" stroke="#1a160a" stroke-width="1.3"/><path d="M1130 894.36 V908.9" stroke="#1a160a" stroke-width="1.3"/><path d="M1136.5 894.555 V909.388" stroke="#1a160a" stroke-width="1.3"/><path d="M1107 893 H1117 V905 H1107 Z" fill="#1a1408"/></g><g filter="url(#b1)" opacity=".7"><path d="M948 899.12 V916.87" stroke="#221a10" stroke-width="1.5"/><path d="M972 901.616 V930.766" stroke="#221a10" stroke-width="1.5"/><path d="M998 904.32 V945.82" stroke="#7a6a58" stroke-width="1.5"/><path d="M1024 907.024 V960.874" stroke="#7a6a58" stroke-width="1.5"/><path d="M1050 909.728 V975.928" stroke="#221a10" stroke-width="1.5"/><path d="M1076 912.432 V990.982" stroke="#7a6a58" stroke-width="1.5"/><path d="M1102 915.136 V996" stroke="#7a6a58" stroke-width="1.5"/><path d="M1128 917.84 V996" stroke="#221a10" stroke-width="1.5"/></g><g filter="url(#b4)"><circle cx="1127.7" cy="832" r="10.4" fill="#ffd050" opacity=".8"/><circle cx="1061" cy="848.4" r="9.36" fill="#ffd050" opacity=".8"/><circle cx="1022.6" cy="856.7" r="7.8" fill="#ffd050" opacity=".8"/><circle cx="999.8" cy="862.6" r="6.5" fill="#ffd050" opacity=".8"/><circle cx="983.2" cy="867" r="5.46" fill="#ffd050" opacity=".8"/><circle cx="970.8" cy="870" r="4.68" fill="#ffd050" opacity=".8"/><circle cx="961" cy="873" r="3.9" fill="#ffd050" opacity=".8"/><circle cx="953" cy="876" r="3.38" fill="#ffd050" opacity=".8"/><circle cx="946" cy="878" r="3.12" fill="#ffd050" opacity=".8"/><circle cx="939" cy="880" r="2.86" fill="#ffd050" opacity=".8"/><circle cx="932" cy="881.6" r="2.6" fill="#ffd050" opacity=".8"/><circle cx="926" cy="883" r="2.6" fill="#ffd050" opacity=".8"/></g><g filter="url(#b1)"><circle cx="1127.7" cy="832" r="4" fill="#fffbe0"/><path d="M1127.7 836 V907.873" stroke="#6a6a50" stroke-width="1.1"/><path d="M1115.7 832 H1139.7 M1127.7 820 V844" stroke="#ffe890" stroke-width=".8" opacity=".8"/><circle cx="1061" cy="848.4" r="3.6" fill="#fffbe0"/><path d="M1061 852 V901.87" stroke="#6a6a50" stroke-width="1.1"/><path d="M1050.2 848.4 H1071.8 M1061 837.6 V859.2" stroke="#ffe890" stroke-width=".8" opacity=".8"/><circle cx="1022.6" cy="856.7" r="3" fill="#fffbe0"/><path d="M1022.6 859.7 V898.414" stroke="#6a6a50" stroke-width="1.1"/><path d="M1013.6 856.7 H1031.6 M1022.6 847.7 V865.7" stroke="#ffe890" stroke-width=".8" opacity=".8"/><circle cx="999.8" cy="862.6" r="2.5" fill="#fffbe0"/><path d="M999.8 865.1 V896.362" stroke="#6a6a50" stroke-width="1.1"/><path d="M992.3 862.6 H1007.3 M999.8 855.1 V870.1" stroke="#ffe890" stroke-width=".8" opacity=".8"/><circle cx="983.2" cy="867" r="2.1" fill="#fffbe0"/><path d="M983.2 869.1 V894.868" stroke="#6a6a50" stroke-width="1.1"/><path d="M976.9 867 H989.5 M983.2 860.7 V873.3" stroke="#ffe890" stroke-width=".8" opacity=".8"/><circle cx="970.8" cy="870" r="1.8" fill="#fffbe0"/><path d="M970.8 871.8 V893.752" stroke="#6a6a50" stroke-width="1.1"/><circle cx="961" cy="873" r="1.5" fill="#fffbe0"/><path d="M961 874.5 V892.87" stroke="#6a6a50" stroke-width="1.1"/><circle cx="953" cy="876" r="1.3" fill="#fffbe0"/><path d="M953 877.3 V892.15" stroke="#6a6a50" stroke-width="1.1"/><circle cx="946" cy="878" r="1.2" fill="#fffbe0"/><path d="M946 879.2 V891.52" stroke="#6a6a50" stroke-width="1.1"/><circle cx="939" cy="880" r="1.1" fill="#fffbe0"/><path d="M939 881.1 V890.89" stroke="#6a6a50" stroke-width="1.1"/><circle cx="932" cy="881.6" r="1" fill="#fffbe0"/><path d="M932 882.6 V890.26" stroke="#6a6a50" stroke-width="1.1"/><circle cx="926" cy="883" r="1" fill="#fffbe0"/><path d="M926 884 V889.72" stroke="#6a6a50" stroke-width="1.1"/></g><g filter="url(#b2)"><path d="M1080 868 L1098 864 L1094 882 H1078 Z" fill="#a8dcec"/><path d="M1112 862 L1134 858 L1130 882 H1112 Z" fill="#d05828"/><rect x="1118" y="864" width="9" height="10" fill="#ffe8c8"/><rect x="1104" y="850" width="10" height="4" fill="#40c060"/></g><path d="M918 899.5 L1088 998 H985 L912 903 Z" fill="#1a1208" opacity=".85" filter="url(#b2)"/><path d="M937 938 L966 950 V998 H937 Z" fill="#c0601c" opacity=".8" filter="url(#b2)"/><g filter="url(#b1)"><path d="M897 903 V924" stroke="#fff4d0" stroke-width="2.2" stroke-linecap="round"/><path d="M902 907 V928.9" stroke="#ffe090" stroke-width="2.26" stroke-linecap="round"/><path d="M907 911 V933.8" stroke="#fff8e0" stroke-width="2.32" stroke-linecap="round"/><path d="M913 915.8 V939.68" stroke="#fff4d0" stroke-width="2.392" stroke-linecap="round"/><path d="M919 920.6 V945.56" stroke="#ffe090" stroke-width="2.464" stroke-linecap="round"/><path d="M926 926.2 V952.42" stroke="#fff8e0" stroke-width="2.548" stroke-linecap="round"/><path d="M933 931.8 V959.28" stroke="#fff4d0" stroke-width="2.632" stroke-linecap="round"/><path d="M940 937.4 V966.14" stroke="#ffe090" stroke-width="2.716" stroke-linecap="round"/><path d="M948 943.8 V973.98" stroke="#fff8e0" stroke-width="2.812" stroke-linecap="round"/><path d="M956 950.2 V981.82" stroke="#fff4d0" stroke-width="2.908" stroke-linecap="round"/><path d="M965 957.4 V990.64" stroke="#ffe090" stroke-width="3.016" stroke-linecap="round"/><path d="M974 964.6 V996" stroke="#fff8e0" stroke-width="3.124" stroke-linecap="round"/><path d="M984 972.6 V996" stroke="#fff4d0" stroke-width="3.244" stroke-linecap="round"/><path d="M994 980.6 V996" stroke="#ffe090" stroke-width="3.364" stroke-linecap="round"/><path d="M1003 987.8 V996" stroke="#fff8e0" stroke-width="3.472" stroke-linecap="round"/><path d="M895 898 V930" stroke="#ffe8a0" stroke-width="2.4" opacity=".8"/><path d="M900 898 V935" stroke="#ffe8a0" stroke-width="2.4" opacity=".8"/><path d="M905 898 V940" stroke="#ffe8a0" stroke-width="2.4" opacity=".8"/><path d="M911 898 V946" stroke="#ffe8a0" stroke-width="2.4" opacity=".8"/><path d="M917 898 V952" stroke="#ffe8a0" stroke-width="2.4" opacity=".8"/></g><g filter="url(#b1)"><path d="M936.5 873 V840 H965.6 V873 H959 V849 H944 V873 Z" fill="#c84a1e"/><path d="M938 856 H964" stroke="#d8602a" stroke-width="3"/><path d="M937 821 H968 V840 H937 Z" fill="#f0c838"/><path d="M908.5 772 L913.7 765.5 L920 766 L965.6 798 L968 822 L937 822 Z" fill="#e2ac20"/><path d="M912 772 L950 822 M918 769 L962 812 M925 790 L940 782 M935 806 L955 796" stroke="#9a6a10" stroke-width="1.5" fill="none"/><path d="M960 798 L966 790 L969 800 Z" fill="#d8a020"/><path d="M913 767 L898 770.5 L890 775.5 L889.5 785" stroke="#b89858" stroke-width="2.2" fill="none"/><path d="M941 826 H964 V836 H941 Z" fill="#fff4b8"/></g><circle cx="914.5" cy="766.3" r="5" fill="#fff8d0" filter="url(#b2)"/><circle cx="914.5" cy="766.3" r="2" fill="#fff"/><g filter="url(#b1)"><path d="M893 848 L899 846 L914 858 L920 876 L908 880 L905 864 Z" fill="#c8922a"/><circle cx="894" cy="847" r="1.6" fill="#fff4c0"/></g><path d="M905 884 L940 876 L962 872 V886 L918 889 Z" fill="#ffd860" opacity=".75" filter="url(#b2)"/><g filter="url(#b1)"><path d="M870.7 813 V886" stroke="#f4f4ff" stroke-width="2.4"/><path d="M870.7 813 L872.4 820 V836 H870.7" fill="#e8e8ff"/><path d="M862 831 H880 M855 847 H887 M850 866.5 H892" stroke="#c8b090" stroke-width="1.2"/><path d="M856 886 C862 880 882 880 890 886 Z" fill="#e8e8f0"/></g><rect x="596" y="888" width="322" height="8.5" fill="#10283a" opacity=".85" filter="url(#b1)"/><g filter="url(#b1)"><path d="M745.4 806.2 L677.5 857.5 C668 864 655 872 640 877.5 C628 882 616 884.5 604 886 L604 889.4 L672 888.4 L672 884 C670 881 672 877 676 872 C680 867 685 862 690 857.5 L746.6 807.4 Z" fill="#8ee080"/><path d="M744.6 808 L680 858.6 C668 867 652 875 634 880.6 L664 882.6 C666 876 676 866 686 857 L745.4 808.6 Z" fill="#f0fff0"/><path d="M672 880 C676 884.4 686 885 704 884.4 L704 887 L668 888 Z" fill="#d8f8c8"/><path d="M540 892 C580 890 620 888 664 886 L919 884.6 V889 L664 892.6 L540 895.4 Z" fill="#e4ffd8"/><path d="M657 889 H671 L669 897.6 H659.4 Z" fill="#f4fff0"/><path d="M585 890 H591 L590 897 H586 Z M599 890 H605 L604 897 H600 Z M831 888 H838 V896 H831 Z" fill="#e8ffe0"/></g><path d="M560 892.4 L918 887" stroke="#d8ffc8" stroke-width="6" filter="url(#b2)" opacity=".6"/><path d="M745 807 L774 864 M745 807 L790 876 M745 807 L760 850 M735 818 L772 880" stroke="#b8b8d8" stroke-width=".6" opacity=".55" fill="none"/></svg></div>
<span class="t" style="left:413.19px;top:497.69px;font-size:17.5px;color:#555;transform:scaleX(1.0138);">Event Invitation</span>
<span class="t" style="left:1000.80px;top:499.39px;font-size:17.5px;color:#555;transform:scaleX(1.0035);text-decoration:underline;">View in browser</span>
<span class="t" style="left:486.19px;top:1027.11px;font-size:27.4px;color:#222;transform:scaleX(1.0067);">November 14th - 16th, 2017, 9:00 am - 6:00 pm</span>
<svg class="ic" style="left:410px;top:1018px" width="50" height="40" viewBox="410 1018 50 40" ><path fill="#231f20" d="M414.2 1025 H446.7 V1046 H414.2 Z"/><path fill="#e9e9ea" d="M418 1024 H426.2 V1027.6 C426.2 1032 418 1032 418 1027.6 Z M436 1024 H444 V1027.6 C444 1032 436 1032 436 1027.6 Z"/><path fill="none" stroke="#231f20" stroke-width="3.6" stroke-linecap="round" d="M422.1 1023 V1027 M439.9 1023 V1027"/><rect x="420.4" y="1037.5" width="13" height="2.6" fill="#fff"/><circle cx="444.6" cy="1052.4" r="11.2" fill="#f6f6f6" stroke="#231f20" stroke-width="3.2"/></svg>
<div id="csb"></div><div id="csbt"></div>
<div id="tbtabs"></div><div id="tbsep"></div><div id="tbline"></div>
<div class="tb on" style="left:1458px;top:569px"></div>
<div class="ti" style="left:1475px;top:585.3px"></div>
<div class="tb" style="left:1652px;top:569px"></div>
<div class="ti" style="left:1668.3px;top:585.3px"></div>
<div class="tb" style="left:1458px;top:647px"></div>
<div class="ti" style="left:1475px;top:663.3px"></div>
<div class="tb" style="left:1652px;top:647px"></div>
<div class="ti" style="left:1668.3px;top:663.3px"></div>
<div class="tb" style="left:1458px;top:724.5px"></div>
<div class="ti" style="left:1475px;top:740.8px"></div>
<div class="tb" style="left:1652px;top:724.5px"></div>
<div class="ti" style="left:1668.3px;top:740.8px"></div>
<div class="tb" style="left:1458px;top:802px"></div>
<div class="ti" style="left:1475px;top:818.3px"></div>
<div id="psb"></div><div id="psbt"></div>
</main>
<footer id="status"></footer>
<header id="top"><div id="waffle"></div><div class="vs" style="left:295.5px"></div><div class="vs" style="left:445.5px"></div><div class="vs" style="left:1542.5px"></div><div class="vs" style="left:1678.5px"></div></header>
<div id="cmd"></div><div id="ham"></div>
<nav id="side"></nav><div id="sel"></div><div id="sidesep"></div>
<span class="t" style="left:95.12px;top:18.66px;font-size:24.5px;color:#fff;transform:scaleX(0.9403);-webkit-text-stroke:.45px #000;">Dynamics 365</span>
<span class="t" style="left:318.40px;top:18.48px;font-size:24px;color:#fff;transform:scaleX(1.0007);-webkit-text-stroke:.45px #000;">Marketing</span>
<span class="t" style="left:467.94px;top:25.21px;font-size:17px;color:#fff;transform:scaleX(1.0617);">Marketing</span>
<span class="t" style="left:583.78px;top:25.21px;font-size:17px;color:#fff;transform:scaleX(1.0181);">Marketing Emails</span>
<span class="t" style="left:1746.70px;top:22.63px;font-size:16.5px;color:#fff;transform:scaleX(1.0396);">Veronika Quek</span>
<span class="t" style="left:115.20px;top:78.61px;font-size:17px;color:#fff;transform:scaleX(0.9244);">Save</span>
<span class="t" style="left:223.50px;top:78.61px;font-size:17px;color:#fff;transform:scaleX(0.9685);">Go Live</span>
<span class="t" style="left:352.70px;top:78.61px;font-size:17px;color:#fff;transform:scaleX(0.9855);">Save &amp; Close</span>
<span class="t" style="left:525.99px;top:78.61px;font-size:17px;color:#fff;transform:scaleX(1.0080);">New</span>
<span class="t" style="left:634.00px;top:78.61px;font-size:17px;color:#fff;transform:scaleX(0.9919);">Check for Errors</span>
<span class="t" style="left:829.80px;top:78.61px;font-size:17px;color:#fff;transform:scaleX(0.9840);">Test Send</span>
<span class="t" style="left:977.00px;top:78.61px;font-size:17px;color:#fff;transform:scaleX(0.9846);">Save as Template</span>
<span class="t" style="left:1182.33px;top:78.61px;font-size:17px;color:#fff;transform:scaleX(0.9722);">Flows</span>
<span class="t" style="left:169.73px;top:154.46px;font-size:16px;color:#333;transform:scaleX(1.0716);">Marketing Email: Designer</span>
<span class="t" style="left:169.36px;top:181.16px;font-size:24.5px;color:#222;transform:scaleX(1.0714);">New Marketing Email</span>
<span class="t" style="left:1167.76px;top:162.95px;font-size:16.6px;color:#333;transform:scaleX(0.9934);-webkit-text-stroke:.3px #fff;">Name</span>
<span class="t" style="left:1518.30px;top:162.95px;font-size:16.6px;color:#333;transform:scaleX(0.9347);-webkit-text-stroke:.3px #fff;">Subject</span>
<span class="t" style="left:1169.89px;top:203.45px;font-size:21.8px;color:#3a3a3a;transform:scaleX(0.9123);-webkit-text-stroke:.45px #fff;">Email s1p (forio)</span>
<span class="t" style="left:1520.80px;top:203.92px;font-size:21px;color:#444;transform:scaleX(0.9435);">---</span>
<span class="t" style="left:85.71px;top:315.63px;font-size:16.5px;color:#222;transform:scaleX(0.9920);font-weight:700;">Design</span>
<span class="t" style="left:176.25px;top:315.63px;font-size:16.5px;color:#555;transform:scaleX(1.0127);">Summary</span>
<span class="t" style="left:145.33px;top:413.78px;font-size:15.5px;color:#444;transform:scaleX(0.9150);font-weight:700;">Designer</span>
<span class="t" style="left:236.37px;top:413.78px;font-size:15.5px;color:#555;transform:scaleX(0.9261);">HTML</span>
<span class="t" style="left:306.08px;top:413.78px;font-size:15.5px;color:#555;transform:scaleX(0.9193);">Preview</span>
<span class="t" style="left:1473.20px;top:470.33px;font-size:16.5px;color:#333;transform:scaleX(0.9223);font-weight:700;">Toolbox</span>
<span class="t" style="left:1607.02px;top:470.33px;font-size:16.5px;color:#444;transform:scaleX(0.9790);">Properties</span>
<span class="t" style="left:1765.00px;top:470.33px;font-size:16.5px;color:#444;transform:scaleX(0.9265);">Styles</span>
<span class="t" style="left:1477.00px;top:534.68px;font-size:15.5px;color:#333;transform:scaleX(1.0240);">Content Blocks</span>
<span class="t" style="left:1480.00px;top:584.81px;font-size:29px;color:#fff;transform:scaleX(0.9476);font-family:'Liberation Serif',serif;-webkit-text-stroke:.5px #fff;">A</span>
<span class="v" style="left:1545.06px;top:593.71px;font-size:15px;color:#fff;transform:scaleX(1.0618);">Text</span>
<span class="v" style="left:1729.45px;top:593.71px;font-size:15px;color:#222;transform:scaleX(1.0536);">Image</span>
<span class="v" style="left:1533.51px;top:671.71px;font-size:15px;color:#222;transform:scaleX(0.9942);">Divider</span>
<span class="v" style="left:1728.89px;top:671.71px;font-size:15px;color:#222;transform:scaleX(1.0074);">Button</span>
<span class="v" style="left:1504.51px;top:748.71px;font-size:15px;color:#222;transform:scaleX(0.9925);">Marketing Pa...</span>
<span class="v" style="left:1732.59px;top:748.71px;font-size:15px;color:#222;transform:scaleX(1.0074);">Event</span>
<span class="v" style="left:1534.50px;top:826.51px;font-size:15px;color:#222;transform:scaleX(0.9962);">Survey</span>
<span class="t" style="left:130.00px;top:1056.00px;font-size:15px;color:#333;transform:scaleX(0.9875);">Active</span>
<span class="t" style="left:1698.70px;top:1056.00px;font-size:15px;color:#333;transform:scaleX(0.9540);">unsaved changes</span>
<span class="t" style="left:1872.60px;top:1056.00px;font-size:15px;color:#333;transform:scaleX(0.8745);">Save</span>
<svg class="ic" style="left:20px;top:18px" width="20" height="20" viewBox="0 0 20 20" ><rect x="0" y="0" width="5" height="5" fill="#e8fbff"/><rect x="7.5" y="0" width="5" height="5" fill="#e8fbff"/><rect x="15" y="0" width="5" height="5" fill="#e8fbff"/><rect x="0" y="7.5" width="5" height="5" fill="#e8fbff"/><rect x="7.5" y="7.5" width="5" height="5" fill="#e8fbff"/><rect x="15" y="7.5" width="5" height="5" fill="#e8fbff"/><rect x="0" y="15" width="5" height="5" fill="#e8fbff"/><rect x="7.5" y="15" width="5" height="5" fill="#e8fbff"/><rect x="15" y="15" width="5" height="5" fill="#e8fbff"/></svg>
<svg class="ic" style="left:258px;top:28px" width="17" height="11" viewBox="0 0 17 11" ><path fill="none" stroke="#fff" stroke-width="1.5" d="M1.5 2 L8.5 9 L15.5 2"/></svg>
<svg class="ic" style="left:562px;top:27px" width="9" height="14" viewBox="0 0 9 14" ><path fill="none" stroke="#fff" stroke-width="1.3" d="M1 1 L7.5 7 L1 13"/></svg>
<svg class="ic" style="left:1307px;top:17px" width="22" height="22" viewBox="0 0 22 22" ><circle cx="13.6" cy="8.4" r="6.6" fill="none" stroke="#fff" stroke-width="1.5"/><path fill="none" stroke="#fff" stroke-width="1.5" d="M9 13 L1.5 20.5"/></svg>
<svg class="ic" style="left:1366px;top:16px" width="24" height="24" viewBox="0 0 24 24" ><path fill="none" stroke="#fff" stroke-width="1.5" d="M19.5 9 A9 9 0 1 1 14 4.2"/><path fill="none" stroke="#fff" stroke-width="1.5" d="M7.5 12.5 L11 16 L21 3.5 M16 3 L21.3 3 L21.3 8.5"/></svg>
<svg class="ic" style="left:1428px;top:17px" width="18" height="22" viewBox="0 0 18 22" ><path fill="none" stroke="#fff" stroke-width="1.5" d="M6 16.5 L6 14.5 C3.5 12.5 2.2 10.5 2.2 8 A6.8 6.8 0 0 1 15.8 8 C15.8 10.5 14.5 12.5 12 14.5 L12 16.5 Z M6.3 16.5 L6.3 20.3 L11.7 20.3 L11.7 16.5"/></svg>
<svg class="ic" style="left:1487px;top:17px" width="22" height="22" viewBox="0 0 22 22" ><path fill="none" stroke="#fff" stroke-width="1.5" d="M11 1 L11 21 M1 11 L21 11"/></svg>
<svg class="ic" style="left:1578px;top:17px" width="22" height="22" viewBox="0 0 22 22" ><path fill="none" stroke="#fff" stroke-width="1.5" stroke-linejoin="round" d="M20.65 9.32 L20.65 12.68 L18.10 12.70 L17.22 14.81 L19.02 16.64 L16.64 19.02 L14.81 17.22 L12.70 18.10 L12.68 20.65 L9.32 20.65 L9.30 18.10 L7.19 17.22 L5.36 19.02 L2.98 16.64 L4.78 14.81 L3.90 12.70 L1.35 12.68 L1.35 9.32 L3.90 9.30 L4.78 7.19 L2.98 5.36 L5.36 2.98 L7.19 4.78 L9.30 3.90 L9.32 1.35 L12.68 1.35 L12.70 3.90 L14.81 4.78 L16.64 2.98 L19.02 5.36 L17.22 7.19 L18.10 9.30 Z"/><circle cx="11" cy="11" r="3.3" fill="none" stroke="#fff" stroke-width="1.5"/></svg>
<svg class="ic" style="left:1642px;top:17px" width="14" height="22" viewBox="0 0 14 22" ><path fill="none" stroke="#fff" stroke-width="1.5" d="M2.5 5.5 C3 0 12 0.3 11.5 5.8 C11.2 9.5 7 10 7 15.5"/><circle cx="7" cy="19.6" r="1.1" fill="#fff"/></svg>
<svg class="ic" style="left:1882px;top:17px" width="22" height="22" viewBox="0 0 22 22" ><circle cx="11" cy="8" r="6" fill="none" stroke="#fff" stroke-width="1.5"/><path fill="none" stroke="#fff" stroke-width="1.5" d="M2 21 C2 16 6 13.6 11 13.6 C16 13.6 20 16 20 21"/></svg>
<svg class="ic" style="left:20px;top:79px" width="20" height="16" viewBox="0 0 20 16" ><path fill="none" stroke="#fff" stroke-width="1.3" d="M0 2.4 H20 M0 7.4 H20 M0 12.4 H20"/></svg>
<svg class="ic" style="left:77.5px;top:77.5px" width="16" height="16" viewBox="0 0 16 16" ><path fill="none" stroke="#fff" stroke-width="1.5" d="M1.5 1.5 H12 L14.5 4 V14.5 H1.5 Z M4.5 1.5 V6 H11 V1.5 M4 14.5 V9.5 H12 V14.5 M6.5 14.5 V11.5"/></svg>
<svg class="ic" style="left:186px;top:76px" width="18" height="20" viewBox="186 76 18 20"><path fill="none" stroke="#fff" stroke-width="1.5" stroke-linejoin="round" d="M189.8 80.9 H193.7 C193 78.2 198.2 78.2 197.5 80.9 H200.5 V84.3 C198 83.4 198 88.7 200.5 87.8 V91.5 H197.5 C198.2 94.3 193 94.3 193.7 91.5 H189.8 V87.8 C187.2 88.7 187.2 83.4 189.8 84.3 Z"/></svg>
<svg class="ic" style="left:315px;top:76px" width="18" height="18" viewBox="0 0 18 18" ><path fill="none" stroke="#fff" stroke-width="1.3" d="M1.5 6.5 H9 L11 8.5 V16.5 H1.5 Z M4 6.5 V10 H8.5 V6.5 M3.5 16.5 V12.5 H9 V16.5 M6 5 V1.5 H8.5 M12.5 1.5 H16.5 V9.5 H13 M9 4 L12 4 M10.6 2.4 L12.2 4 L10.6 5.6"/></svg>
<svg class="ic" style="left:488px;top:76.5px" width="19" height="19" viewBox="0 0 19 19" ><path fill="none" stroke="#fff" stroke-width="1.3" d="M9.5 0.5 V18 M0.7 9.3 H18.3"/></svg>
<svg class="ic" style="left:596.6px;top:76px" width="18" height="20" viewBox="186 76 18 20"><path fill="none" stroke="#fff" stroke-width="1.5" stroke-linejoin="round" d="M189.8 80.9 H193.7 C193 78.2 198.2 78.2 197.5 80.9 H200.5 V84.3 C198 83.4 198 88.7 200.5 87.8 V91.5 H197.5 C198.2 94.3 193 94.3 193.7 91.5 H189.8 V87.8 C187.2 88.7 187.2 83.4 189.8 84.3 Z"/></svg>
<svg class="ic" style="left:791.9px;top:76px" width="18" height="20" viewBox="186 76 18 20"><path fill="none" stroke="#fff" stroke-width="1.5" stroke-linejoin="round" d="M189.8 80.9 H193.7 C193 78.2 198.2 78.2 197.5 80.9 H200.5 V84.3 C198 83.4 198 88.7 200.5 87.8 V91.5 H197.5 C198.2 94.3 193 94.3 193.7 91.5 H189.8 V87.8 C187.2 88.7 187.2 83.4 189.8 84.3 Z"/></svg>
<svg class="ic" style="left:939.6px;top:76px" width="18" height="20" viewBox="186 76 18 20"><path fill="none" stroke="#fff" stroke-width="1.5" stroke-linejoin="round" d="M189.8 80.9 H193.7 C193 78.2 198.2 78.2 197.5 80.9 H200.5 V84.3 C198 83.4 198 88.7 200.5 87.8 V91.5 H197.5 C198.2 94.3 193 94.3 193.7 91.5 H189.8 V87.8 C187.2 88.7 187.2 83.4 189.8 84.3 Z"/></svg>
<svg class="ic" style="left:1144px;top:78px" width="20" height="16" viewBox="0 0 20 16" ><path fill="none" stroke="#fff" stroke-width="1.5" d="M1.5 9.5 H6.5 V14.5 H1.5 Z M13.5 1.5 H17.5 V5.5 H13.5 Z M6.5 11 C11 10 9 4 13.5 3.5"/></svg>
<svg class="ic" style="left:1235.5px;top:80.5px" width="18" height="12" viewBox="0 0 18 12" ><path fill="none" stroke="#fff" stroke-width="1.5" d="M1 1.5 L9 10 L17 1.5"/></svg>
<svg class="ic" style="left:0px;top:112px" width="60" height="720" viewBox="0 112 60 720" ><path fill="none" stroke="#fff" stroke-width="1.4" d="M20.2 139 H24.2 V144.3 H20.2 Z M24.2 139 L34.2 135.3 V148 L24.2 144.3 M34.2 135 H36.6 V148.3 H34.2 M24.8 144.8 L26.2 150.4 H28.6 L27.6 145.6"/><path fill="none" stroke="#fff" stroke-width="1.3" d="M38 137.6 H40.3 M38 141.2 H40.3 M38 144.8 H40.3"/><circle cx="21.4" cy="202.8" r="1.2" fill="#fff"/><circle cx="30" cy="202.8" r="1.2" fill="#fff"/><circle cx="38.5" cy="202.8" r="1.2" fill="#fff"/><path fill="none" stroke="#fff" stroke-width="1.4" d="M29.4 254 V273 M19.7 263.4 H39.2"/><path fill="none" stroke="#fff" stroke-width="1.6" d="M21.5 255.6 V261.8 M24.3 257.6 V261.8 M27.1 255.6 V261.8"/><path fill="none" stroke="#fff" stroke-width="1.3" d="M31.4 256.4 H37.8 M31.4 258.9 H37.8 M31.4 261.3 H37.8 M31.4 268 L33.6 270.6 L35.2 269 L38.4 266.4"/><path fill="#fff" d="M23.2 269.2 L23.2 266 A3.2 3.2 0 1 0 26.4 269.2 Z"/><path fill="#fff" d="M24.2 265.3 A3 3 0 0 1 27 268.2 L24.2 268.2 Z"/><path fill="none" stroke="#fff" stroke-width="1.4" d="M24.2 330.6 H21.3 V314.5 H35.6 V318.5 M24.3 316.4 H33.2 V321.4 H36.5 L38.8 323.7 V333.4 H24.3 Z"/><path fill="none" stroke="#fff" stroke-width="1.4" d="M20.5 375.6 H39.5 V392.4 H20.5 Z M20.5 379 H39.5 M24.3 373.6 V377 M35.4 373.6 V377"/><rect x="26.9" y="381.2" width="1.5" height="1.3" fill="#fff"/><rect x="30.3" y="381.2" width="1.5" height="1.3" fill="#fff"/><rect x="33.9" y="381.2" width="1.5" height="1.3" fill="#fff"/><rect x="23.5" y="384.2" width="1.5" height="1.3" fill="#fff"/><rect x="26.9" y="384.2" width="1.5" height="1.3" fill="#fff"/><rect x="30.3" y="384.2" width="1.5" height="1.3" fill="#fff"/><rect x="33.9" y="384.2" width="1.5" height="1.3" fill="#fff"/><rect x="23.5" y="387" width="1.5" height="1.3" fill="#fff"/><rect x="26.9" y="387" width="1.5" height="1.3" fill="#fff"/><rect x="30.3" y="387" width="1.5" height="1.3" fill="#fff"/><rect x="33.9" y="387" width="1.5" height="1.3" fill="#fff"/><rect x="23.5" y="389.4" width="1.5" height="1.3" fill="#fff"/><rect x="26.9" y="389.4" width="1.5" height="1.3" fill="#fff"/><rect x="30.3" y="389.4" width="1.5" height="1.3" fill="#fff"/><path fill="none" stroke="#fff" stroke-width="1.4" d="M24.9 435.3 c-1.6 -1.3 -3.6 0.2 -3.3 2.6 c0.9 6.6 6.2 12.6 13.2 14 c2.6 0.5 4.4 -1.6 3.4 -3.6 c-0.8 -1.6 -2.6 -2.4 -4 -1.4 l-1.4 1 c-3.2 -1.6 -5.6 -4.2 -6.8 -7.6 l0.8 -1 c0.9 -1.3 -0.3 -2.8 -1.9 -4 z"/><path fill="none" stroke="#fff" stroke-width="1.3" d="M21.7 500.6 H26 L33 508 H38.7 V513.3 H21.7 Z M24 500.4 V496.4 H35 V507.6 M25.8 496 V494.6 H37 V507.6"/><circle cx="29.9" cy="559.9" r="5.6" fill="none" stroke="#fff" stroke-width="1.4"/><path fill="none" stroke="#fff" stroke-width="1.4" d="M21.4 574 C21.4 568.6 25.4 566.3 29.9 566.3 C34.4 566.3 38.4 568.6 38.4 574"/><path fill="none" stroke="#fff" stroke-width="1.4" d="M32.6 616.4 A8.7 8.7 0 1 1 25 631 L32.6 625.2 Z"/><path fill="none" stroke="#fff" stroke-width="1.2" d="M29.6 614.4 V622.4 H21 A8.6 8.6 0 0 1 29.6 614.4 Z M20.7 624.6 H28.6 L23.2 629.6 C21.8 628.4 20.9 626.6 20.7 624.6 Z"/><path fill="none" stroke="#fff" stroke-width="1.4" d="M20.4 681.6 L39.6 678.4 V689.4 L20.4 686.4 Z M25.4 687.4 A2.3 2.3 0 0 0 30 688"/><path fill="none" stroke="#fff" stroke-width="1.4" d="M20.5 738.4 H39.5 V749.6 H20.5 Z M20.8 738.8 L30 744.6 L39.2 738.8"/><path fill="none" stroke="#fff" stroke-width="1.3" d="M23.6 800.6 c-1.2 -1 -2.8 0.1 -2.6 1.9 c0.7 5 4.8 9.6 10.2 10.7 c2 0.4 3.4 -1.2 2.6 -2.8 c-0.6 -1.2 -2 -1.8 -3.1 -1.1 l-1.1 0.8 c-2.4 -1.2 -4.3 -3.2 -5.2 -5.8 l0.6 -0.8 c0.7 -1 -0.2 -2.1 -1.4 -2.9 z"/><path fill="none" stroke="#fff" stroke-width="1.2" stroke-linejoin="round" d="M39.42 798.94 L39.42 800.86 L37.79 800.83 L37.31 801.99 L38.48 803.12 L37.12 804.48 L35.99 803.31 L34.83 803.79 L34.86 805.42 L32.94 805.42 L32.97 803.79 L31.81 803.31 L30.68 804.48 L29.32 803.12 L30.49 801.99 L30.01 800.83 L28.38 800.86 L28.38 798.94 L30.01 798.97 L30.49 797.81 L29.32 796.68 L30.68 795.32 L31.81 796.49 L32.97 796.01 L32.94 794.38 L34.86 794.38 L34.83 796.01 L35.99 796.49 L37.12 795.32 L38.48 796.68 L37.31 797.81 L37.79 798.97 Z"/><circle cx="33.9" cy="799.9" r="2" fill="none" stroke="#fff" stroke-width="1.1"/></svg>
<svg class="ic" style="left:88px;top:160px" width="68" height="46" viewBox="88 160 68 46" ><defs><clipPath id="envc"><ellipse cx="122.1" cy="183.1" rx="31" ry="34"/></clipPath></defs><g clip-path="url(#envc)"><path fill="none" stroke="#050505" stroke-width="4.2" d="M93.1 165.9 H150.9 V200.4 H93.1 Z"/><path fill="none" stroke="#050505" stroke-width="4" d="M93.5 168.2 L122 182.6 L150.5 168.2"/></g></svg>
<svg class="ic" style="left:383px;top:154px" width="21" height="14" viewBox="383 154 21 14" ><path fill="none" stroke="#222" stroke-width="1.3" d="M385.4 157 L393.4 165 L401.4 157"/></svg>
<svg class="ic" style="left:1856px;top:161px" width="22" height="14" viewBox="1856 161 22 14" ><path fill="none" stroke="#222" stroke-width="1.3" d="M1859 164.4 L1867.4 172.6 L1875.8 164.4"/></svg>
<svg class="ic" style="left:1750px;top:200px" width="30" height="24" viewBox="1750 200 30 24" ><path fill="none" stroke="#111" stroke-width="1.9" d="M1759.6 207 L1754.2 212.4 L1759.6 217.8 M1770.4 207 L1775.8 212.4 L1770.4 217.8 M1768 203.6 L1762.4 221.6"/></svg>
<svg class="ic" style="left:450px;top:410px" width="285" height="28" viewBox="450 410 285 28" ><path fill="none" stroke="#1a1a1a" stroke-width="1.4" d="M464.8 415.8 V433.2 M456 424.5 H473.8"/><path fill="none" stroke="#1a1a1a" stroke-width="1.4" d="M543.4 416 V420.8 H548.8 M544 420.4 C546 417.4 548.6 416.1 551 416.1 C554 416.1 556 418.4 556 421.4 C556 423.2 555 424.6 553.6 425.8 L547.2 432.7"/><path fill="none" stroke="#1a1a1a" stroke-width="1.4" d="M641.6 416 V420.8 H636.2 M641 420.4 C639 417.4 636.4 416.1 634 416.1 C631 416.1 629 418.4 629 421.4 C629 423.2 630 424.6 631.4 425.8 L637.8 432.7"/><path fill="none" stroke="#111" stroke-width="1.7" d="M713.4 431 L727 417.6 M720.8 417.2 H727.4 V423.8 M713 424.6 V431.4 H719.6"/></svg>
<svg class="ic" style="left:1405px;top:458px" width="20" height="20" viewBox="1405 458 20 20" ><path fill="none" stroke="#555" stroke-width="1.2" d="M1410.2 470.4 L1415 465.4 L1419.8 470.4"/></svg>
<svg class="ic" style="left:1900px;top:275px" width="20" height="20" viewBox="1900 275 20 20" ><path fill="none" stroke="#555" stroke-width="1.2" d="M1904.8 287.6 L1909.8 282.6 L1914.8 287.6"/></svg>
<svg class="ic" style="left:1900px;top:1024px" width="20" height="20" viewBox="1900 1024 20 20" ><path fill="none" stroke="#555" stroke-width="1.2" d="M1904.8 1031 L1909.8 1036 L1914.8 1031"/></svg>
<svg class="ic" style="left:1452px;top:531px" width="20" height="18" viewBox="1452 531 20 18" ><path fill="#555" d="M1470 533.6 V547.6 H1455 Z"/></svg>
<svg class="ic" style="left:66px;top:1054px" width="22" height="20" viewBox="66 1054 22 20" ><path fill="none" stroke="#333" stroke-width="1.3" d="M78.6 1058.6 H70.2 V1070.4 H84.4 V1064.6 M70.4 1065.4 H76.6 V1070.2 M78 1064.6 L84.6 1058.2 M80.2 1058 H84.8 V1062.6"/></svg>
<svg class="ic" style="left:187px;top:1050px" width="1" height="22" viewBox="187 1050 1 22" ><path stroke="#bdbdbd" stroke-width="1" d="M187.5 1050 V1071"/></svg>
<svg class="ic" style="left:1845px;top:1053px" width="18" height="18" viewBox="1845 1053 18 18" ><path fill="none" stroke="#333" stroke-width="1.3" d="M1847.6 1055.6 H1858.6 L1860.8 1057.8 V1069 H1847.6 Z M1850.4 1055.6 V1060 H1857.4 V1055.6 M1850 1069 V1064.4 H1858.4 V1069 M1852.6 1069 V1066.4"/></svg>
<svg class="ic" style="left:1155px;top:622px" width="46" height="44" viewBox="1155 622 46 44" ><path fill="#fff" stroke="#cfcfcf" stroke-width="0.9" stroke-linejoin="miter" d="M1157.2 627.2 L1157.2 660.9 L1165.3 653.5 L1169.5 664.8 L1174.7 662.2 L1170.5 651.5 L1181.5 651.5 Z"/><path fill="#fff" stroke="#1a1a1a" stroke-width="1.1" stroke-linejoin="miter" d="M1172.4 624.9 L1172.4 658.6 L1180.5 651.2 L1184.7 662.5 L1189.9 659.9 L1185.7 649.2 L1196.7 649.2 Z"/></svg>
<svg class="ic" style="left:1470px;top:580px" width="236" height="270" viewBox="1470 580 236 270" ><path fill="none" stroke="#eef4ff" stroke-width="1.3" d="M1673.6 593.2 H1692.6 V606.4 H1673.6 Z M1674 601.6 L1679.2 596.6 L1687.6 604.8 M1685 602.2 L1687.4 600 L1692.4 604.8"/><circle cx="1688.6" cy="596.4" r="1" fill="#eef4ff"/><path fill="none" stroke="#eef4ff" stroke-width="1.3" d="M1480 677.2 H1499"/><path fill="none" stroke="#eef4ff" stroke-width="1.3" d="M1683 682.6 H1673.6 V670.4 H1691.8 V675.6"/><path fill="#1b47b5" stroke="#eef4ff" stroke-width="1.2" d="M1685.4 680.4 V675.2 C1685.4 673.6 1687.8 673.6 1687.8 675.2 V678.4 L1690.6 678.8 C1692.2 679.2 1692.6 680.2 1692.6 681.6 C1692.6 684.8 1690.8 686.6 1688 686.6 C1685 686.6 1683 684.6 1683 681.6 C1683 680.6 1684.2 679.8 1685.4 680.4 Z"/><path fill="none" stroke="#eef4ff" stroke-width="1.3" d="M1481.4 746 H1497.8 V764 H1481.4 Z M1483.8 748.6 H1495.4 V753.4 H1483.8 Z M1483.8 756.6 H1495.4 V761.6 H1483.8 Z"/><path fill="none" stroke="#eef4ff" stroke-width="1.3" d="M1673.2 747 H1692.8 V763.4 H1673.2 Z M1673.2 749.8 H1692.8 M1677.6 745.6 V748.6 M1688.8 745.6 V748.6"/><path fill="none" stroke="#eef4ff" stroke-width="1.3" d="M1479.8 824.8 H1499.4 V841.2 H1479.8 Z M1479.8 827.6 H1499.4 M1484.2 823.4 V826.4 M1495.4 823.4 V826.4"/></svg>
</body></html>
